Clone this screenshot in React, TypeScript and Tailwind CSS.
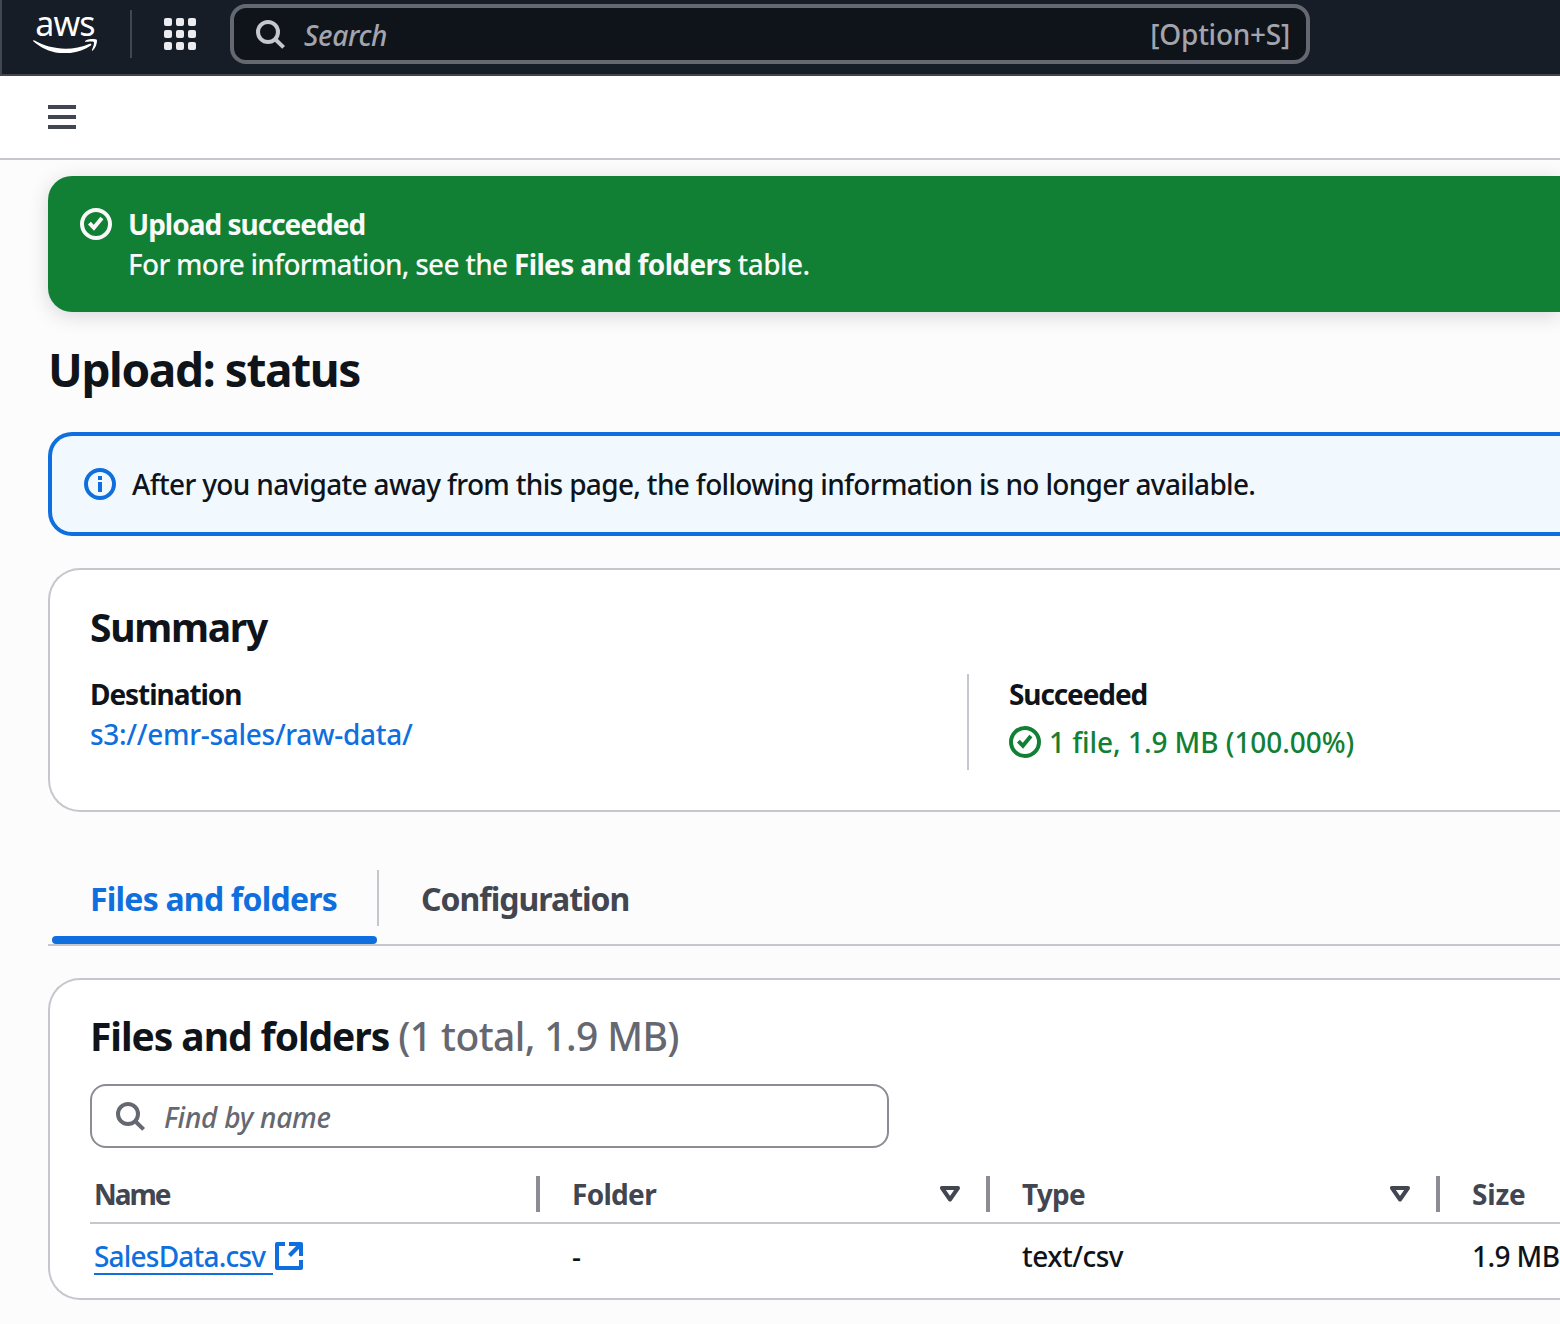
import type { ReactNode } from "react";

function CheckCircle({ className = "" }: { className?: string }) {
  return (
    <svg className={`size-8 shrink-0 ${className}`} viewBox="0 0 32 32" fill="none" stroke="currentColor" strokeWidth="4">
      <circle cx="16" cy="16" r="14" />
      <path d="m9.400 15.200 4.500 4.600 8-9.700" />
    </svg>
  );
}

function InfoCircle() {
  return (
    <svg className="size-8 shrink-0 text-[#0f6fde]" viewBox="0 0 32 32" fill="none" stroke="currentColor" strokeWidth="4">
      <circle cx="16" cy="16" r="14" />
      <path d="M16 8v4M16 14v10" />
    </svg>
  );
}

function SearchIcon({ className = "" }: { className?: string }) {
  return (
    <svg className={`size-8 shrink-0 ${className}`} viewBox="0 0 32 32" fill="none" stroke="currentColor" strokeWidth="4">
      <circle cx="14" cy="14" r="10" />
      <path d="m21 21 8.600 8.400" />
    </svg>
  );
}

function ExternalIcon() {
  return (
    <svg className="size-8 shrink-0 text-[#0f6fde]" viewBox="0 0 32 32" fill="none" stroke="currentColor" strokeWidth="4">
      <path d="M12 4H4v24h24v-8" strokeLinejoin="round" />
      <path d="M16 4h12v12" strokeLinejoin="round" />
      <path d="M28 4 16.500 15.500" />
    </svg>
  );
}

function SortIcon() {
  return (
    <svg className="h-4 w-5 shrink-0 text-[#424650]" viewBox="0 0 20 16" fill="none" stroke="currentColor" strokeWidth="4" strokeLinejoin="round">
      <path d="M2 2h16l-8 11.500Z" />
    </svg>
  );
}

function AwsLogo() {
  return (
    <div className="flex w-16 flex-col items-center text-white">
      <span className="h-8 text-[34px] font-normal leading-8 tracking-[-0.8px]">aws</span>
      <svg className="h-[14.4px] w-16" viewBox="0 13.8 24 5.4" fill="currentColor">
        <path d="M21.698 16.207c-2.626 1.94-6.442 2.969-9.722 2.969-4.598 0-8.740-1.700-11.870-4.526-.247-.223-.024-.527.272-.351 3.384 1.963 7.559 3.153 11.877 3.153 2.914 0 6.114-.607 9.060-1.852.439-.2.814.287.383.607z" />
        <path d="M22.792 14.961c-.336-.43-2.220-.207-3.074-.103-.255.032-.295-.192-.063-.36 1.500-1.053 3.967-.75 4.254-.399.287.36-.08 2.826-1.485 4.007-.215.184-.423.088-.327-.151.32-.79 1.030-2.570.695-2.994z" />
      </svg>
    </div>
  );
}

const DOTS = [0, 1, 2, 3, 4, 5, 6, 7, 8];

function TopNav() {
  return (
    <header className="flex h-[76px] shrink-0 items-start border-b-2 border-l-2 border-[#424650] bg-[#161d26]">
      <div className="ml-[31px] mt-[7px]">
        <AwsLogo />
      </div>
      <div className="ml-[33px] mt-2.5 h-12 w-0.5 bg-[#424650]" />
      <div className="ml-8 mt-[18px] grid grid-cols-3 gap-1">
        {DOTS.map((d) => (
          <span key={d} className="size-2 rounded-[2px] bg-[#ebebf0]" />
        ))}
      </div>
      <div className="ml-[34px] mt-1 flex h-[60px] w-[1080px] items-center rounded-2xl border-4 border-[#656871] bg-[#0f141a] pl-5 pr-4 text-[#a4a4ad]">
        <SearchIcon className="text-[#c6c6cd]" />
        <span className="ml-[18px] mt-px grow text-[28px] italic leading-10 tracking-[-0.3px]">Search</span>
        <span className="-mt-px text-[28px] leading-10 tracking-[-0.25px]">[Option+S]</span>
      </div>
    </header>
  );
}

function Panel({ className = "", children }: { className?: string; children: ReactNode }) {
  return (
    <section className={`ml-12 shrink-0 rounded-l-[32px] border-2 border-r-0 border-[#c6c6cd] bg-white pl-10 ${className}`}>
      {children}
    </section>
  );
}

function HeaderCell({ label, className, sortable }: { label: string; className: string; sortable?: boolean }) {
  return (
    <div className={`flex h-9 shrink-0 items-center font-bold text-[#424650] ${className}`}>
      <span className="grow">{label}</span>
      {sortable && <SortIcon />}
    </div>
  );
}

export default function App() {
  return (
    <div className="flex h-[1324px] w-full flex-col overflow-hidden bg-[#fcfcfd] font-['Noto_Sans',sans-serif] text-[28px] font-medium leading-10 text-[#0f141a]">
      <TopNav />
      <div className="flex h-[84px] shrink-0 items-center border-b-2 border-[#c6c6cd] bg-white pl-12">
        <div className="flex flex-col gap-1.5">
          <span className="h-1 w-7 bg-[#424650]" />
          <span className="h-1 w-7 bg-[#424650]" />
          <span className="h-1 w-7 bg-[#424650]" />
        </div>
      </div>

      <div className="ml-12 mt-4 flex h-[136px] shrink-0 items-start gap-4 rounded-l-[24px] bg-[#118034] pl-8 pt-7 text-[#f9f9fa] shadow-[0_4px_20px_rgba(0,7,22,0.15)]">
        <CheckCircle className="mt-1" />
        <div className="whitespace-nowrap">
          <div className="font-bold tracking-[-1px]">Upload succeeded</div>
          <div className="tracking-[-0.75px]">
            For more information, see the <b className="tracking-[-0.64px]">Files and folders</b>
            <span className="tracking-[-0.55px]"> table.</span>
          </div>
        </div>
      </div>

      <h1 className="ml-12 mt-[27px] h-[60px] shrink-0 text-[46px] font-bold leading-[60px] tracking-[-1.38px]">Upload: status</h1>

      <div className="ml-12 mt-[33px] flex h-[104px] shrink-0 items-center gap-4 rounded-l-[24px] border-4 border-r-0 border-[#0f6fde] bg-[#f1f9ff] pl-8">
        <InfoCircle />
        <span className="whitespace-nowrap tracking-[-0.67px]">
          After you navigate away from this page, the following information is no longer available.
        </span>
      </div>

      <Panel className="mt-8 h-[244px] pt-[33px]">
        <h2 className="h-12 text-[39px] font-bold leading-[48px] tracking-[-1.3px]">Summary</h2>
        <div className="mt-[23px] flex">
          <div className="w-[877px]">
            <div className="font-bold tracking-[-1.05px]">Destination</div>
            <div className="tracking-[-0.3px] text-[#0f6fde]">s3://emr-sales/raw-data/</div>
          </div>
          <div className="h-24 border-l-2 border-[#c6c6cd] pl-10">
            <div className="font-bold tracking-[-1.1px]">Succeeded</div>
            <div className="mt-2 flex items-center gap-2 tracking-[-0.06px] text-[#118034]">
              <CheckCircle />
              <span>1 file, 1.9 MB (100.00%)</span>
            </div>
          </div>
        </div>
      </Panel>

      <nav className="ml-12 mt-[58px] flex h-[76px] shrink-0 items-start border-b-2 border-[#c6c6cd] pl-1 text-[32px] font-bold text-[#424650]">
        <div className="flex h-[74px] w-[325px] flex-col justify-between text-[#0f6fde]">
          <span className="ml-[38px] mt-[9px] whitespace-nowrap tracking-[-0.78px]">Files and folders</span>
          <span className="h-2 rounded-full bg-[#0f6fde]" />
        </div>
        <div className="h-14 w-0.5 bg-[#c6c6cd]" />
        <span className="ml-[42px] mt-[9px] tracking-[-1px]">Configuration</span>
      </nav>

      <Panel className="mt-8 h-[322px] pt-8">
        <h2 className="h-12 whitespace-nowrap text-[39px] font-bold leading-[48px] tracking-[-1.06px]">
          Files and folders <span className="font-medium tracking-[-0.6px] text-[#656871]">(1 total, 1.9 MB)</span>
        </h2>
        <div className="mt-6 flex h-16 w-[799px] items-center rounded-2xl border-2 border-[#8c8c94] pl-[22px] text-[#656871]">
          <SearchIcon />
          <span className="ml-[18px] mt-px italic tracking-[-0.25px]">Find by name</span>
        </div>
        <div className="mt-7 flex h-12 border-b-2 border-[#c6c6cd] pl-1">
          <HeaderCell label="Name" className="w-[446px] border-r-4 border-[#8c8c94] tracking-[-2px]" />
          <HeaderCell label="Folder" className="w-[450px] border-r-4 border-[#8c8c94] pl-8 pr-[26px] tracking-[-0.7px]" sortable />
          <HeaderCell label="Type" className="w-[450px] border-r-4 border-[#8c8c94] pl-8 pr-[26px] tracking-[-0.8px]" sortable />
          <HeaderCell label="Size" className="pl-8 tracking-[-0.2px]" />
        </div>
        <div className="mt-3 flex h-10 whitespace-nowrap pl-1">
          <div className="flex w-[478px] items-start">
            <a className="h-[39px] w-[179px] border-b-2 border-[#0f6fde] tracking-[-0.8px] text-[#0f6fde]">SalesData.csv</a>
            <span className="mt-1">
              <ExternalIcon />
            </span>
          </div>
          <div className="w-[450px]">-</div>
          <div className="w-[450px] tracking-[-0.5px]">text/csv</div>
          <div className="tracking-[-0.6px]">1.9 MB</div>
        </div>
      </Panel>
    </div>
  );
}
